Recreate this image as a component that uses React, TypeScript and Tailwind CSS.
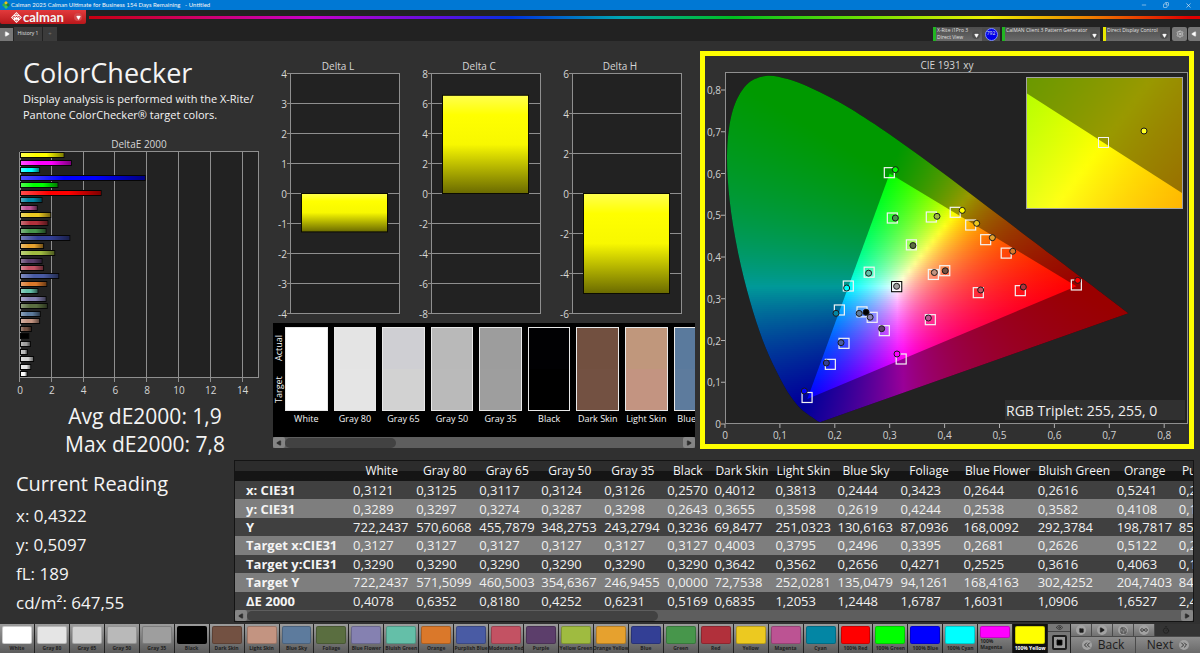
import React from "react";
import clsx from "clsx";
import {
    ChevronsLeft,
    ChevronsRight,
    Copy,
    Eye,
    Infinity as Loop,
    Minus,
    Play,
    Save,
    Settings,
    Square,
    Timer,
    X,
} from "lucide-react";

type Point = [number, number];

type Patch = {
    name: string;
    color: string;
    deltaE: number;
    target?: Point;
    actual?: Point;
};

const PATCHES: Patch[] = [
    { name: "White", color: "#ffffff", deltaE: 0.41 },
    { name: "Gray 80", color: "#e5e5e5", deltaE: 0.64 },
    { name: "Gray 65", color: "#d2d2d2", deltaE: 0.82 },
    { name: "Gray 50", color: "#b9b9b9", deltaE: 0.43 },
    { name: "Gray 35", color: "#9e9e9e", deltaE: 0.62, target: [0.3127, 0.329], actual: [0.3126, 0.3298] },
    { name: "Black", color: "#000000", deltaE: 0.52, actual: [0.257, 0.2675] },
    { name: "Dark Skin", color: "#735142", deltaE: 0.68, target: [0.4003, 0.3672], actual: [0.4012, 0.367] },
    { name: "Light Skin", color: "#c39481", deltaE: 1.2, target: [0.3795, 0.3582], actual: [0.3813, 0.3628] },
    { name: "Blue Sky", color: "#5d7b9d", deltaE: 1.24, target: [0.2496, 0.2686], actual: [0.2444, 0.2649] },
    { name: "Foliage", color: "#5a6e40", deltaE: 1.68, target: [0.3395, 0.4291], actual: [0.3423, 0.4274] },
    { name: "Blue Flower", color: "#8581b1", deltaE: 1.6, target: [0.2681, 0.2555], actual: [0.2644, 0.2558] },
    { name: "Bluish Green", color: "#64bfa8", deltaE: 1.09, target: [0.2626, 0.3636], actual: [0.2616, 0.3612] },
    { name: "Orange", color: "#da782a", deltaE: 1.65, target: [0.5122, 0.4093], actual: [0.5241, 0.4138] },
    { name: "Purplish Blue", color: "#495ba4", deltaE: 2.4, target: [0.2168, 0.1932], actual: [0.2113, 0.1948] },
    { name: "Moderate Red", color: "#c35263", deltaE: 1.45, target: [0.4614, 0.3146], actual: [0.4657, 0.321] },
    { name: "Purple", color: "#5c3e6b", deltaE: 1.35, target: [0.2902, 0.2236], actual: [0.2854, 0.2283] },
    { name: "Yellow Green", color: "#9fbb40", deltaE: 2.15, target: [0.3758, 0.4958], actual: [0.3862, 0.4974] },
    { name: "Orange Yellow", color: "#e6a12e", deltaE: 1.45, target: [0.4748, 0.4415], actual: [0.487, 0.4463] },
    { name: "Blue", color: "#333f95", deltaE: 3.1, target: [0.1919, 0.1429], actual: [0.1846, 0.1461] },
    { name: "Green", color: "#47964b", deltaE: 1.6, target: [0.3048, 0.4934], actual: [0.3103, 0.4934] },
    { name: "Red", color: "#b1303b", deltaE: 1.72, target: [0.5379, 0.3194], actual: [0.5434, 0.3281] },
    { name: "Yellow", color: "#ecc920", deltaE: 1.9, target: [0.4475, 0.4766], actual: [0.4584, 0.4806] },
    { name: "Magenta", color: "#bc5393", deltaE: 1.05, target: [0.374, 0.2499], actual: [0.3704, 0.2539] },
    { name: "Cyan", color: "#0386a4", deltaE: 1.35, target: [0.2083, 0.2731], actual: [0.2022, 0.2651] },
    { name: "100% Red", color: "#ff0000", deltaE: 5.07, target: [0.64, 0.333], actual: [0.6424, 0.3441] },
    { name: "100% Green", color: "#00ff00", deltaE: 2.35, target: [0.2993, 0.602], actual: [0.3103, 0.6092] },
    { name: "100% Blue", color: "#0000ff", deltaE: 7.84, target: [0.1495, 0.0635], actual: [0.1445, 0.079] },
    { name: "100% Cyan", color: "#00ffff", deltaE: 1.2, target: [0.2246, 0.3305], actual: [0.2216, 0.3257] },
    { name: "100% Magenta", color: "#ff00ff", deltaE: 3.2, target: [0.3209, 0.1557], actual: [0.3133, 0.1677] },
    { name: "100% Yellow", color: "#ffff00", deltaE: 2.73, target: [0.4193, 0.507], actual: [0.4322, 0.5117] },
];

const STRIP = [
    { name: "White", actual: "#ffffff", target: "#ffffff" },
    { name: "Gray 80", actual: "#e4e4e4", target: "#e5e5e5" },
    { name: "Gray 65", actual: "#cfcfd3", target: "#d2d2d2" },
    { name: "Gray 50", actual: "#b9b9b9", target: "#bababa" },
    { name: "Gray 35", actual: "#9d9d9d", target: "#9e9e9e" },
    { name: "Black", actual: "#010103", target: "#000000" },
    { name: "Dark Skin", actual: "#725040", target: "#735142" },
    { name: "Light Skin", actual: "#c0977c", target: "#c39481" },
    { name: "Blue Sky", actual: "#5a7a9d", target: "#5d7b9d" },
];

const COLUMNS = [
    { name: "White", width: 63, values: ["0,3121", "0,3289", "722,2437", "0,3127", "0,3290", "722,2437", "0,4078"] },
    { name: "Gray 80", width: 63, values: ["0,3125", "0,3297", "570,6068", "0,3127", "0,3290", "571,5099", "0,6352"] },
    { name: "Gray 65", width: 62, values: ["0,3117", "0,3274", "455,7879", "0,3127", "0,3290", "460,5003", "0,8180"] },
    { name: "Gray 50", width: 63, values: ["0,3124", "0,3287", "348,2753", "0,3127", "0,3290", "354,6367", "0,4252"] },
    { name: "Gray 35", width: 63, values: ["0,3126", "0,3298", "243,2794", "0,3127", "0,3290", "246,9455", "0,6231"] },
    { name: "Black", width: 47, values: ["0,2570", "0,2643", "0,3236", "0,3127", "0,3290", "0,0000", "0,5169"] },
    { name: "Dark Skin", width: 61, values: ["0,4012", "0,3655", "69,8477", "0,4003", "0,3642", "72,7538", "0,6835"] },
    { name: "Light Skin", width: 62, values: ["0,3813", "0,3598", "251,0323", "0,3795", "0,3562", "252,0281", "1,2053"] },
    { name: "Blue Sky", width: 63, values: ["0,2444", "0,2619", "130,6163", "0,2496", "0,2656", "135,0479", "1,2448"] },
    { name: "Foliage", width: 63, values: ["0,3423", "0,4244", "87,0936", "0,3395", "0,4271", "94,1261", "1,6787"] },
    { name: "Blue Flower", width: 74, values: ["0,2644", "0,2538", "168,0092", "0,2681", "0,2525", "168,4163", "1,6031"] },
    { name: "Bluish Green", width: 79, values: ["0,2616", "0,3582", "292,3784", "0,2626", "0,3616", "302,4252", "1,0906"] },
    { name: "Orange", width: 62, values: ["0,5241", "0,4108", "198,7817", "0,5122", "0,4063", "204,7403", "1,6527"] },
    { name: "Purplish Blue", width: 86, values: ["0,2113", "0,1948", "85,1442", "0,2168", "0,1932", "84,2170", "2,4018"] },
];

const ROW_LABELS = ["x: CIE31", "y: CIE31", "Y", "Target x:CIE31", "Target y:CIE31", "Target Y", "ΔE 2000"];

const LOCUS: Point[] = [
    [0.1741, 0.005], [0.1714, 0.0051], [0.1644, 0.0109], [0.1566, 0.0177], [0.144, 0.0297], [0.1355, 0.0399],
    [0.1241, 0.0578], [0.1096, 0.0868], [0.0913, 0.1327], [0.0687, 0.2007], [0.0454, 0.295], [0.0235, 0.4127],
    [0.0082, 0.5384], [0.0039, 0.6548], [0.0139, 0.7502], [0.0389, 0.812], [0.0743, 0.8338], [0.1142, 0.8262],
    [0.1547, 0.8059], [0.1929, 0.7816], [0.2296, 0.7543], [0.3016, 0.6923], [0.3731, 0.6245], [0.4441, 0.5547],
    [0.5125, 0.4866], [0.5752, 0.4242], [0.627, 0.3725], [0.6658, 0.334], [0.6915, 0.3083], [0.719, 0.2809],
    [0.7347, 0.2653],
];

const GAMUT: Point[] = [[0.64, 0.33], [0.3, 0.6], [0.15, 0.06]];

// Brightest linear RGB mix for a chromaticity, out-of-gamut channels clipped
function chromaColor(x: number, y: number) {
    const sy = Math.max(y, 0.001);
    const X = x / sy;
    const Z = (1 - x - sy) / sy;
    const linear = [
        3.2406 * X - 1.5372 - 0.4986 * Z,
        -0.9689 * X + 1.8758 + 0.0415 * Z,
        0.0557 * X - 0.204 + 1.057 * Z,
    ].map(v => Math.max(v, 0));
    const peak = Math.max(...linear, 0.0001);
    const [r, g, b] = linear.map(v => Math.round((255 * v) / peak));
    return `rgb(${r},${g},${b})`;
}

function smoothPath(points: Point[]) {
    let d = `M${points[0][0]} ${points[0][1]}`;
    for (let i = 0; i < points.length - 1; i++) {
        const p0 = points[Math.max(i - 1, 0)];
        const p1 = points[i];
        const p2 = points[i + 1];
        const p3 = points[Math.min(i + 2, points.length - 1)];
        d += `C${p1[0] + (p2[0] - p0[0]) / 6} ${p1[1] + (p2[1] - p0[1]) / 6}`
            + ` ${p2[0] - (p3[0] - p1[0]) / 6} ${p2[1] - (p3[1] - p1[1]) / 6} ${p2[0]} ${p2[1]}`;
    }
    return d + "Z";
}

type SpectrumProps = {
    id: string;
    left: number;
    top: number;
    width: number;
    height: number;
    toX: (px: number) => number;
    toY: (py: number) => number;
};

// Stack of thin horizontal gradients that together fill a chromaticity plane
function Spectrum({ id, left, top, width, height, toX, toY }: SpectrumProps) {
    const step = 2;
    const rows = Math.ceil(height / step);
    const stops = Math.ceil(width / 6);

    return (
        <g id={id} shapeRendering="crispEdges">
            {Array.from({ length: rows }, (_, row) => {
                const y = top + row * step;
                return (
                    <g key={row}>
                        <linearGradient id={`${id}-${row}`}>
                            {Array.from({ length: stops + 1 }, (_, s) => (
                                <stop
                                    key={s}
                                    offset={s / stops}
                                    stopColor={chromaColor(toX(left + (width * s) / stops), toY(y + step / 2))}
                                />
                            ))}
                        </linearGradient>
                        <rect x={left} y={y} width={width} height={step} fill={`url(#${id}-${row})`} />
                    </g>
                );
            })}
        </g>
    );
}

const X0 = 20;
const Y0 = 368;
const px = (x: number) => X0 + x * 549;
const py = (y: number) => Y0 - y * 417.5;
const insetX = (x: number) => 398.5 + (x - 0.4193) * 3157;
const insetY = (y: number) => 86.5 - (y - 0.5053) * 2550;

function ChromaticityChart() {
    const triangle = GAMUT.map(([x, y]) => `${px(x)},${py(y)}`).join(" ");
    const insetTriangle = GAMUT.map(([x, y]) => `${insetX(x)},${insetY(y)}`).join(" ");

    return (
        <svg viewBox="0 0 484 388" className="block h-auto w-full" role="img" aria-label="CIE 1931 xy">
            <defs>
                <clipPath id="locus">
                    <path d={smoothPath(LOCUS.map(([x, y]) => [px(x), py(y)] as Point))} />
                </clipPath>
                <clipPath id="gamut"><polygon points={triangle} /></clipPath>
                <clipPath id="inset"><rect x="322" y="22" width="155" height="130" /></clipPath>
                <clipPath id="inset-gamut"><polygon points={insetTriangle} /></clipPath>
            </defs>

            <text x="242" y="13" textAnchor="middle" fontSize="10" fill="#d6d6d6">CIE 1931 xy</text>
            <rect x="20.5" y="16.5" width="462" height="351" fill="#222222" stroke="#8f8f8f" />

            {Array.from({ length: 9 }, (_, i) => (
                <g key={i} fontSize="10" fill="#d0d0d0" stroke="none">
                    <path d={`M16 ${py(i / 10)}h4M${px(i / 10)} 368v4`} stroke="#b0b0b0" />
                    <text x="16" y={py(i / 10) + 4} textAnchor="end">{i ? `0,${i}` : "0"}</text>
                    <text x={px(i / 10)} y="383" textAnchor="middle">{i ? `0,${i}` : "0"}</text>
                </g>
            ))}

            <g clipPath="url(#locus)">
                <rect x="20" y="17" width="410" height="351" fill="#000000" />
                <g opacity="0.6">
                    <Spectrum
                        id="plane" left={20} top={17} width={410} height={351}
                        toX={v => (v - X0) / 549} toY={v => (Y0 - v) / 417.5}
                    />
                </g>
            </g>
            <g clipPath="url(#gamut)"><use href="#plane" /></g>

            {PATCHES.map(({ name, target }) => target && (
                <rect
                    key={name}
                    x={px(target[0]) - 5} y={py(target[1]) - 5} width="10" height="10"
                    fill="none" stroke={name === "Gray 35" ? "#000000" : "#f4f4f4"} strokeWidth="1.2"
                />
            ))}
            <rect x={px(0.3127) - 4} y={py(0.329) - 4} width="8" height="8" fill="none" stroke="#ffffff" />
            {PATCHES.map(({ name, color, actual }) => actual && (
                <circle key={name} cx={px(actual[0])} cy={py(actual[1])} r="3" fill={color} stroke="#1a1a1a" />
            ))}

            <g clipPath="url(#inset)">
                <rect x="322" y="22" width="155" height="130" fill="#000000" />
                <g opacity="0.6">
                    <Spectrum
                        id="zoomed" left={322} top={22} width={156} height={132}
                        toX={v => 0.4193 + (v - 398.5) / 3157} toY={v => 0.5053 - (v - 86.5) / 2550}
                    />
                </g>
                <g clipPath="url(#inset-gamut)"><use href="#zoomed" /></g>
            </g>
            <rect x="321.5" y="21.5" width="156" height="131" fill="none" stroke="#a4a4a4" />
            <rect x="393.5" y="81.5" width="10" height="10" fill="none" stroke="#f4f4f4" />
            <circle cx="439" cy="75" r="3" fill="#ffff20" stroke="#1a1a1a" />

            <rect x="300" y="344" width="180" height="20" fill="#303030" />
            <text x="301" y="360" fontSize="14" fill="#f0f0f0">RGB Triplet: 255, 255, 0</text>
        </svg>
    );
}

function DeltaEChart() {
    const bars = [...PATCHES].reverse();
    const unit = 15.9;

    return (
        <svg viewBox="0 0 273 264" className="mt-[13px] block h-auto w-full" role="img" aria-label="DeltaE 2000">
            <defs>
                <linearGradient id="shine">
                    <stop offset="0" stopColor="#ffffff" stopOpacity="0.3" />
                    <stop offset="0.35" stopColor="#ffffff" stopOpacity="0" />
                    <stop offset="0.6" stopColor="#000000" stopOpacity="0" />
                    <stop offset="1" stopColor="#000000" stopOpacity="0.5" />
                </linearGradient>
            </defs>
            <text x="139" y="12" textAnchor="middle" fontSize="10" fill="#d6d6d6">DeltaE 2000</text>
            <rect x="20.5" y="15.5" width="238" height="226" fill="#222222" stroke="#8f8f8f" />
            {[0, 2, 4, 6, 8, 10, 12, 14].map(v => (
                <g key={v}>
                    <path d={`M${Math.round(20 + v * unit) - 0.5} 16v230`} stroke="#8f8f8f" />
                    <text x={20 + v * unit} y="258" textAnchor="middle" fontSize="10" fill="#d6d6d6">{v}</text>
                </g>
            ))}
            {bars.map(({ name, color, deltaE }, i) => {
                const y = 16 + Math.round(i * 7.56);
                return (
                    <g key={name}>
                        <rect x="20" y={y} width={deltaE * unit + 1} height="6" fill="#060606" />
                        <rect x="21" y={y + 1} width={deltaE * unit - 1} height="4" fill={color} />
                        {name !== "Black" && (
                            <rect x="21" y={y + 1} width={deltaE * unit - 1} height="4" fill="url(#shine)" />
                        )}
                    </g>
                );
            })}
        </svg>
    );
}

const DELTAS = [
    { title: "Delta L", max: 4, step: 1, value: -1.28 },
    { title: "Delta C", max: 8, step: 2, value: 6.55 },
    { title: "Delta H", max: 6, step: 2, value: -5 },
];

function DeltaCharts() {
    return (
        <svg viewBox="0 0 422 264" className="mt-4 block h-auto w-full" role="img" aria-label="Delta L, C and H">
            <defs>
                <linearGradient id="yellow-bar" x2="0" y2="1">
                    <stop offset="0" stopColor="#ffff50" />
                    <stop offset="0.2" stopColor="#ffff00" />
                    <stop offset="0.5" stopColor="#f8f800" />
                    <stop offset="1" stopColor="#6a6a00" />
                </linearGradient>
            </defs>
            {DELTAS.map(({ title, max, step, value }, i) => {
                const left = 18 + i * 141;
                const ticks = Array.from({ length: (2 * max) / step + 1 }, (_, t) => max - t * step);
                const toY = (v: number) => 136.5 - (v / max) * 120;
                const top = Math.min(toY(value), toY(0));
                return (
                    <g key={title}>
                        <text x={left + 47} y="13" textAnchor="middle" fontSize="10" fill="#d6d6d6">{title}</text>
                        <rect x={left - 0.5} y="16.5" width="109" height="240" fill="#222222" stroke="#8f8f8f" />
                        {ticks.map(v => (
                            <g key={v}>
                                <path d={`M${left - 4} ${Math.round(toY(v)) - 0.5}h112`} stroke="#8f8f8f" />
                                <text x={left - 4} y={toY(v) + 4} textAnchor="end" fontSize="10" fill="#d6d6d6">{v}</text>
                            </g>
                        ))}
                        <rect
                            x={left + 10.5} y={top} width="86" height={Math.abs(toY(value) - toY(0))}
                            fill="url(#yellow-bar)" stroke="#0c0c00"
                        />
                    </g>
                );
            })}
        </svg>
    );
}

function ScrollBar({ thumbClass }: { thumbClass: string }) {
    return (
        <div className="flex h-[11px] items-center bg-[#5e5e5e]">
            <button type="button" aria-label="Scroll left" className="flex h-[11px] w-3 items-center justify-center rounded-xs bg-[#858585]">
                <Play size={6} className="rotate-180 fill-[#2c2c2c] text-[#2c2c2c]" />
            </button>
            <div className="flex-1">
                <div className={clsx("h-[10px] rounded-full bg-[#424242]", thumbClass)} />
            </div>
            <button type="button" aria-label="Scroll right" className="flex h-[11px] w-3 items-center justify-center rounded-xs bg-[#858585]">
                <Play size={6} className="fill-[#2c2c2c] text-[#2c2c2c]" />
            </button>
        </div>
    );
}

function SwatchStrip() {
    return (
        <div className="mt-0.5 overflow-hidden bg-black">
            <div className="flex h-[114px] overflow-hidden pt-1">
                <div className="flex h-[84px] w-[9px] shrink-0 rotate-180 justify-around text-[9px] leading-[11px] [writing-mode:vertical-rl]">
                    <span>Target</span>
                    <span>Actual</span>
                </div>
                <div className="flex min-w-0 flex-1 overflow-hidden">
                    {STRIP.map(({ name, actual, target }) => (
                        <div key={name} className="w-2/17 shrink-0 px-[3px]">
                            <div className="flex h-[84px] flex-col border border-[#e8e8e8]">
                                <div className="flex-1" style={{ background: actual }} />
                                <div className="flex-1" style={{ background: target }} />
                            </div>
                            <div className="-mx-1 text-center text-[9px] leading-4 whitespace-nowrap">{name}</div>
                        </div>
                    ))}
                </div>
            </div>
            <ScrollBar thumbClass="w-[28%]" />
        </div>
    );
}

function ReadingsTable() {
    return (
        <div className="mt-[2px] mr-[6px] min-w-0 flex-1 overflow-hidden border border-[#141414]">
            <div className="overflow-hidden">
                <table className="h-[149px] w-[1027px] table-fixed border-collapse text-[13px] leading-[18px] whitespace-nowrap">
                    <colgroup>
                        <col style={{ width: 115 }} />
                        {COLUMNS.map(({ name, width }) => <col key={name} style={{ width }} />)}
                    </colgroup>
                    <thead className="bg-linear-to-b from-[#2c2c2c] from-50% to-[#151515] to-50% text-[12px]">
                        <tr className="h-5">
                            <td />
                            {COLUMNS.map(({ name }) => (
                                <th key={name} scope="col" className="p-0 text-center font-normal">{name}</th>
                            ))}
                        </tr>
                    </thead>
                    <tbody>
                        {ROW_LABELS.map((label, row) => (
                            <tr key={label} className={row % 2 ? "bg-[#7e7e7e]" : "bg-[#404040]"}>
                                <th scope="row" className="p-0 pl-[11px] text-left font-bold">{label}</th>
                                {COLUMNS.map(({ name, values }) => (
                                    <td key={name} className="p-0 pl-[3px] text-[#f0f0f0]">{values[row]}</td>
                                ))}
                            </tr>
                        ))}
                    </tbody>
                </table>
            </div>
            <ScrollBar thumbClass="w-[44%]" />
        </div>
    );
}

type DeviceProps = {
    lines: string[];
    accentClass: string;
    widthClass: string;
};

function DeviceMenu({ lines, accentClass, widthClass }: DeviceProps) {
    return (
        <button
            type="button"
            aria-haspopup="menu"
            className={clsx(
                "flex h-[14px] shrink-0 items-start justify-between border-l-3 bg-linear-to-b from-[#4c4c4c] to-[#6a6a6a] pl-px text-left text-[5px] leading-[7px] whitespace-nowrap",
                accentClass,
                widthClass
            )}
        >
            <span>
                {lines.map(line => <span key={line} className="block">{line}</span>)}
            </span>
            <span className="mt-1 mr-0.5 flex size-2 shrink-0 items-center justify-center rounded-full bg-[#505050]">
                <Play size={5} className="rotate-90 fill-white" />
            </span>
        </button>
    );
}

function Header() {
    return (
        <header className="bg-[#222222]">
            <div className="flex h-[10px] items-center bg-[#0078d4] pl-[2px] text-[6px] leading-[10px]">
                <svg viewBox="0 0 8 8" className="size-2">
                    <path d="M4 0l2 2-2 2-2-2z" fill="#e8c21c" />
                    <path d="M2 2l2 2-2 2-2-2z" fill="#35b04a" />
                    <path d="M6 2l2 2-2 2-2-2z" fill="#1f7e36" />
                    <path d="M4 4l2 2-2 2-2-2z" fill="#3cc85c" />
                </svg>
                <span className="ml-px font-[Lato] whitespace-pre">Calman 2025 Calman Ultimate for Business 154 Days Remaining   - Untitled</span>
                <div className="ml-auto flex gap-4 pr-2">
                    <button type="button" aria-label="Minimize"><Minus size={6} /></button>
                    <button type="button" aria-label="Restore"><Copy size={6} className="-scale-x-100" /></button>
                    <button type="button" aria-label="Close"><X size={7} /></button>
                </div>
            </div>

            <div className="flex h-[17px] items-start">
                <button
                    type="button"
                    className="flex h-[14px] w-[86px] shrink-0 items-center rounded-b-xs bg-linear-to-b from-[#e23a3c] to-[#b9161b] pl-[11px]"
                >
                    <svg viewBox="0 0 12 12" className="size-[11px]" fill="none" stroke="white" strokeWidth="1.1">
                        <path d="M6 .8L11.200 6 6 11.200.8 6zM3.400 3.400L8.600 8.600M8.600 3.400L3.400 8.600M6 3.200L8.800 6 6 8.800 3.200 6z" />
                    </svg>
                    <span className="ml-px font-[Lato] text-[13px] leading-[12px] font-bold">calman</span>
                    <span className="mr-1 ml-auto flex size-2 items-center justify-center rounded-full bg-[#d4474a]">
                        <Play size={5} className="rotate-90 fill-white" />
                    </span>
                </button>
                <div className="mt-1.5 ml-[3px] h-[3px] flex-1 bg-[linear-gradient(90deg,#c80010_0%,#d0006a_10%,#c800c8_20%,#5a10e0_32%,#0030e0_38%,#00a8b0_48%,#00c020_58%,#70e000_70%,#f0f000_81%,#f08000_90%,#e00000_99%)]" />
            </div>

            <div className="flex h-[14px] items-center text-[#e0e0e0]">
                <button type="button" aria-label="Show panel" className="flex h-[13px] w-[13px] items-center justify-center bg-[#777777]">
                    <Play size={6} className="fill-white" />
                </button>
                <button type="button" className="ml-px h-[14px] w-[28px] bg-[#3b3b3b] text-center text-[5px]">History 1</button>
                <button type="button" aria-label="Add history" className="h-[14px] w-[15px] border-l border-[#222222] bg-[#3b3b3b] text-[6px] text-[#777777]">+</button>
                <div className="ml-auto flex">
                    <DeviceMenu lines={["X-Rite i1Pro 3", "Direct View"]} accentClass="border-[#22b522]" widthClass="w-[49px]" />
                    <div className="mr-0.5 flex w-[18px] items-center justify-center bg-[#4c4c4c]">
                        <span className="flex size-[13px] items-center justify-center rounded-full border border-[#7c8cff] bg-[#0000e8] text-[5px]">792</span>
                    </div>
                    <DeviceMenu lines={["CalMAN Client 3 Pattern Generator"]} accentClass="border-[#22b522]" widthClass="mr-[3px] w-[98px]" />
                    <DeviceMenu lines={["Direct Display Control"]} accentClass="border-[#e8e800]" widthClass="mr-0.5 w-[67px]" />
                    <button type="button" aria-label="Settings" className="mr-px flex w-[15px] items-center justify-center rounded-xs bg-[#777777]">
                        <Settings size={8} />
                    </button>
                    <button type="button" aria-label="Collapse panel" className="flex w-3 items-center justify-center rounded-l-xs bg-[#777777]">
                        <Play size={6} className="rotate-180 fill-white" />
                    </button>
                </div>
            </div>
        </header>
    );
}

const TRANSPORT = [
    { label: "Stop", icon: <Square size={5} className="fill-current" /> },
    { label: "Play", icon: <Play size={6} className="fill-current" /> },
    { label: "Save", icon: <Save size={7} /> },
    { label: "Continuous", icon: <Loop size={8} /> },
];

function Footer() {
    return (
        <footer className="mt-px flex h-[29px] bg-[#1c1c1c]">
            <div className="flex min-w-0 flex-1">
                {PATCHES.map(({ name, color }) => {
                    const active = name === "100% Yellow";
                    const wraps = name === "100% Magenta";
                    return (
                        <button
                            key={name}
                            type="button"
                            className={clsx(
                                "flex min-w-0 flex-1 flex-col items-center overflow-hidden border-r border-[#222222] px-0.5 pt-0.5 text-[5px] font-bold whitespace-nowrap",
                                active ? "bg-[#101010] text-white" : "bg-linear-to-b from-[#9c9c9c] to-[#5c5c5c] text-[#1f1f1f]"
                            )}
                        >
                            <span
                                className={clsx("w-full shrink-0 rounded-xs border border-black/20", wraps ? "h-3" : "h-[18px]")}
                                style={{ background: color }}
                            />
                            <span className={clsx(wraps ? "text-left leading-[6px] whitespace-normal" : "leading-[8px]")}>{name}</span>
                        </button>
                    );
                })}
            </div>
            <div className="flex w-[152px] shrink-0 text-[#1d1d1d]">
                <div className="flex w-[23px] flex-col border-r border-[#222222] bg-[#777777]">
                    <button type="button" aria-label="Preview" className="flex h-2 items-center justify-center border-b border-[#444444]">
                        <Eye size={7} />
                    </button>
                    <button type="button" aria-label="Full window" className="m-auto flex size-[15px] items-center justify-center rounded-xs border-2 border-[#1d1d1d] bg-[#999999]">
                        <Square size={7} className="fill-black" />
                    </button>
                </div>
                <div className="flex flex-1 flex-col">
                    <div className="flex h-[13px] bg-[#343434]">
                        {TRANSPORT.map(({ label, icon }) => (
                            <button
                                key={label}
                                type="button"
                                aria-label={label}
                                className="flex w-[21px] items-center justify-center border-r border-[#4a4a4a] bg-linear-to-b from-[#9a9a9a] to-[#707070]"
                            >
                                <span className="flex size-[10px] items-center justify-center rounded-full bg-[#a2a2a2]">{icon}</span>
                            </button>
                        ))}
                        <button type="button" aria-label="Timer" className="flex w-[21px] items-center justify-center">
                            <Timer size={8} />
                        </button>
                    </div>
                    <div className="flex flex-1 text-[12px] leading-4">
                        <button type="button" className="flex flex-1 items-center justify-center gap-1.5 border-t border-r border-[#4a4a4a] bg-linear-to-b from-[#8c8c8c] to-[#6a6a6a]">
                            <ChevronsLeft size={10} className="rounded-full bg-[#a2a2a2]" />
                            Back
                        </button>
                        <button type="button" className="flex flex-1 items-center justify-center gap-1.5 border-t border-[#4a4a4a] bg-linear-to-b from-[#8c8c8c] to-[#6a6a6a]">
                            Next
                            <ChevronsRight size={10} className="rounded-full bg-[#a2a2a2]" />
                        </button>
                    </div>
                </div>
            </div>
        </footer>
    );
}

function App() {
    return (
        <div className="flex min-h-screen flex-col bg-[#303030] font-['Open_Sans','Noto_Sans',sans-serif] text-[#f4f4f4]">
            <Header />

            <main className="flex-1">
                <div className="grid grid-cols-[273fr_422fr_505fr]">
                    <section>
                        <h1 className="mt-[14px] pl-[23px] text-[27px] leading-9">ColorChecker</h1>
                        <p className="pl-[23px] text-[11px] leading-4 whitespace-nowrap">
                            Display analysis is performed with the X-Rite/
                            <br />
                            Pantone ColorChecker® target colors.
                        </p>
                        <DeltaEChart />
                        <div className="pt-[2px] pl-[17px] text-center text-[21px] leading-[28px]">
                            <p>Avg dE2000: 1,9</p>
                            <p>Max dE2000: 7,8</p>
                        </div>
                    </section>

                    <section>
                        <DeltaCharts />
                        <SwatchStrip />
                    </section>

                    <section className="pt-[10px] pr-[6px] pl-[5px]">
                        <div className="border-[5px] border-[#ffff00]">
                            <ChromaticityChart />
                        </div>
                    </section>
                </div>

                <div className="flex">
                    <section className="w-[234px] shrink-0 pt-[9px] pl-4">
                        <h2 className="text-[20px] leading-[34px]">Current Reading</h2>
                        <div className="text-[17px] leading-[29px]">
                            <p>x: 0,4322</p>
                            <p>y: 0,5097</p>
                            <p>fL: 189</p>
                            <p>cd/m²: 647,55</p>
                        </div>
                    </section>
                    <ReadingsTable />
                </div>
            </main>

            <Footer />
        </div>
    );
}

export default App;
